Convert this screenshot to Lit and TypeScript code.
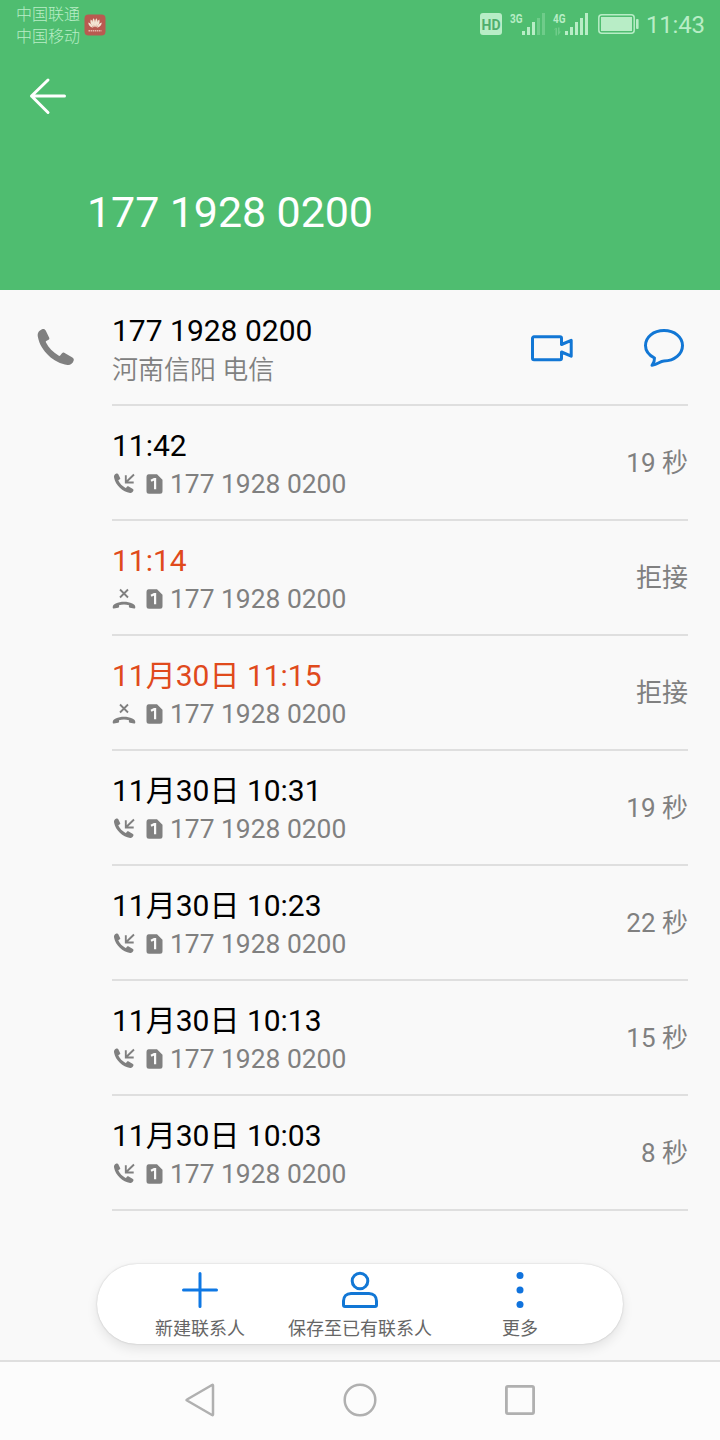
import { LitElement, html, css, svg } from "lit";
import { customElement, property } from "lit/decorators.js";

interface Call {
  time: string;
  note: string;
  rejected?: boolean;
}

const NUMBER = "177 1928 0200";

const CALLS: Call[] = [
  { time: "11:42", note: "19 秒" },
  { time: "11:14", note: "拒接", rejected: true },
  { time: "11月30日 11:15", note: "拒接", rejected: true },
  { time: "11月30日 10:31", note: "19 秒" },
  { time: "11月30日 10:23", note: "22 秒" },
  { time: "11月30日 10:13", note: "15 秒" },
  { time: "11月30日 10:03", note: "8 秒" },
];

const handset = svg`<path d="M11.700 5.600L15.200 12.800C15.600 13.800 15.300 14.400 14.500 14.800L12.300 16C11.700 16.400 11.700 16.900 12 17.600C14.500 22.500 19 27.500 24.500 30.600C25.200 31 25.700 31 26.200 30.400L28 28.200C28.700 27.400 29.400 27.300 30.200 27.700L38 32.200C39.600 33.100 40.100 34.100 39.700 35.500C38.700 38.600 36.200 40.400 33.500 40C20 38.200 6.500 26 3.900 12C3.200 8.500 4.200 5.800 8 4.200C9.800 3.500 10.900 4 11.700 5.600Z"/>`;

@customElement("status-bar")
class StatusBar extends LitElement {
  static styles = css`
    :host { display: flex; height: 48px; padding: 0 16px 0 16px; color: #b8edc6; }
    .carriers { padding-top: 4px; font-size: 16px; line-height: 22px; font-weight: 300; }
    .app { margin: 14px 0 0 4px; width: 22px; height: 22px; }
    .space { flex: 1; }
    .signal { width: 161px; height: 48px; }
    .clock { width: 58px; margin-left: 6px; font-size: 24px; line-height: 50px; letter-spacing: -0.2px; white-space: nowrap; }
  `;
  render() {
    return html`
      <div class="carriers"><div>中国联通</div><div>中国移动</div></div>
      <svg class="app" viewBox="0 0 22 22">
        <rect x=".5" y=".5" width="21" height="21" rx="4" fill="#b95a50" />
        <g fill="#f3e6d4">
          <path d="M10.600 13.200C8.200 9.500 7.800 6 9.700 4.200c1.500 2 1.700 5.500.9 9zM11.400 13.200c2.400-3.700 2.800-7.200.9-9-1.500 2-1.700 5.500-.9 9z" />
          <path d="M9.800 13.400C6.800 11 5.800 8 6.700 5.600 9 7 9.900 10 9.800 13.400zM12.200 13.400c3-2.400 4-5.400 3.100-7.800-2.300 1.400-3.200 4.400-3.100 7.800z" />
          <path d="M9 13.800C6 13.200 4.200 11 4.300 8.500 6.900 9.200 8.400 11.200 9 13.800zM13 13.800c3-.6 4.800-2.800 4.700-5.300-2.600.7-4.100 2.700-4.700 5.300z" />
        </g>
        <path d="M4.500 16.800h13" stroke="#e8b8ad" stroke-width="1.500" stroke-dasharray="1.500 .6" />
      </svg>
      <div class="space"></div>
      <svg class="signal" viewBox="479 0 161 48" fill="#b8edc6">
        <rect x="480" y="13" width="22" height="22" rx="3" />
        <text x="481.500" y="29.500" font-family="Roboto" font-weight="700" font-size="15.500" textLength="19" lengthAdjust="spacingAndGlyphs" fill="#4fae6c">HD</text>
        <g font-family="Roboto" font-weight="700" font-size="12.500">
          <text x="510" y="22.500" textLength="12.500" lengthAdjust="spacingAndGlyphs">3G</text>
          <text x="553" y="22.500" textLength="12.500" lengthAdjust="spacingAndGlyphs">4G</text>
        </g>
        <path d="M522 31h3v4h-3zM527 27h3v8h-3zM532 22h3v13h-3zM565 31h3v4h-3zM570 27h3v8h-3zM575 22h3v13h-3zM580 18h3v17h-3zM585 13h3v22h-3z" />
        <path opacity=".3" d="M537 18h3v17h-3zM542 13h3v22h-3zM553.500 30.500l2-3v8h1.500v-8zM558 27.500v8l3-4h-1.500v-4z" />
        <rect x="598.800" y="14.800" width="35.400" height="18.400" rx="3" fill="none" stroke="#b8edc6" stroke-width="1.500" />
        <rect x="601" y="17" width="31" height="14" />
        <rect x="636" y="19" width="2.600" height="10" rx="1" />
      </svg>
      <div class="clock">11:43</div>
    `;
  }
}

@customElement("call-row")
class CallRow extends LitElement {
  @property({ attribute: false }) call!: Call;

  static styles = css`
    :host { display: flex; height: 113px; align-items: center; justify-content: space-between; border-bottom: 2px solid #dfdfdf; }
    .main { margin-top: 4px; }
    .time { font-size: 30px; line-height: 38px; color: #000; padding-top: 1px; white-space: nowrap; }
    .time.rejected { color: #e04a1c; }
    .line { display: flex; align-items: center; height: 38px; font-size: 26.400px; color: #808080; }
    .kind { width: 24px; height: 24px; margin-right: 10px; }
    .sim { width: 17px; height: 20px; margin-right: 7px; }
    .note { font-size: 26px; line-height: 38px; color: #808080; padding-top: 1px; }
  `;
  render() {
    const { time, note, rejected } = this.call;
    return html`
      <div class="main">
        <div class="time ${rejected ? "rejected" : ""}">${time}</div>
        <div class="line">
          ${rejected
            ? html`<svg class="kind" viewBox="0 0 24 24" fill="#808080">
                <path d="M8 2.500l8 8M16 2.500l-8 8" stroke="#808080" stroke-width="1.800" />
                <path transform="translate(0 1)" d="M.700 19.200c0-1.700 1-2.700 3-3.600 5-2.400 11.600-2.400 16.600 0 2 .9 3 1.900 3 3.600 0 1-.4 1.400-1.200 1.300l-4.200-.8c-.8-.2-1.100-.6-1-1.300l.1-1.200c-3.200-.9-6.800-.9-10 0l.1 1.200c.1.700-.2 1.100-1 1.300l-4.200.8C1.100 20.600.7 20.200.7 19.200z" />
              </svg>`
            : html`<svg class="kind" viewBox="0 0 24 24" fill="#808080">
                <g transform="translate(0 -.700) scale(.540)">${handset}</g>
                <path d="M22 2.500l-8 7.800M13.800 3.300v7.200h7.900" fill="none" stroke="#808080" stroke-width="1.900" />
              </svg>`}
          <svg class="sim" viewBox="0 0 17 20">
            <path d="M2.500.3H11l5.500 5.500v11.400a2.500 2.500 0 0 1-2.500 2.500H3A2.500 2.500 0 0 1 .5 17.200V2.800A2.500 2.500 0 0 1 2.500.3z" fill="#808080" />
            <path d="M5 6.800l3.200-1.600h.9v10" fill="none" stroke="#fafafa" stroke-width="2.200" />
          </svg>
          <span>${NUMBER}</span>
        </div>
      </div>
      <div class="note">${note}</div>
    `;
  }
}

@customElement("app-root")
class AppRoot extends LitElement {
  static styles = css`
    :host { display: flex; flex-direction: column; height: 1440px; background: #f9f9f9; font-family: Roboto, "Noto Sans CJK SC", sans-serif; overflow: hidden; }
    .head { height: 290px; background: #4fbd70; color: #fff; }
    .back { display: block; width: 40px; height: 40px; margin: 28px 0 0 28px; }
    .title { margin: 69px 0 0 87px; font-size: 43px; line-height: 54px; letter-spacing: -0.1px; }
    .body { height: 1070px; display: flex; flex-direction: column; }
    .contact { display: flex; height: 116px; }
    .phone { flex: none; width: 44px; height: 44px; margin: 35px 34px 0 34px; }
    .info { flex: 1; margin-right: 32px; display: flex; box-sizing: border-box; border-bottom: 2px solid #dfdfdf; padding-top: 21px; }
    .who { flex: 1; }
    .number { font-size: 30px; line-height: 40px; }
    .place { font-size: 26px; line-height: 38px; color: #808080; font-weight: 350; }
    .video { width: 44px; height: 30px; margin: 22px 69px 0 0; }
    .chat { width: 42px; height: 40px; margin: 17px 3px 0 0; }
    .log { margin: 0 32px 0 112px; }
    .actions { box-sizing: border-box; width: 526px; height: 80px; margin: auto auto 16px 97px; border-radius: 40px; background: #fff; box-shadow: 0 0 2px rgba(0,0,0,.2), 0 5px 12px rgba(0,0,0,.09); display: grid; grid-template-columns: 160px 160px 160px; padding-left: 23px; }
    .action { display: flex; flex-direction: column; align-items: center; font-size: 18px; line-height: 26px; color: #666; white-space: nowrap; padding-top: 6px; }
    .action svg { flex: none; width: 40px; height: 40px; margin-bottom: 6px; }
    .nav { flex: 1; box-sizing: border-box; border-top: 2px solid #dfdfdf; padding-bottom: 2px; background: #fcfcfc; display: grid; grid-template-columns: 160px 160px 160px; justify-content: center; justify-items: center; align-items: center; }
    .nav svg { width: 36px; height: 36px; }
  `;
  render() {
    return html`
      <div class="head">
        <status-bar></status-bar>
        <svg class="back" viewBox="0 0 40 40" fill="none" stroke="#fff" stroke-width="3" stroke-linecap="round" stroke-linejoin="round">
          <path d="M20 4L3.500 20 20 36.500M3.500 20h33" />
        </svg>
        <div class="title">${NUMBER}</div>
      </div>
      <div class="body">
        <div class="contact">
          <svg class="phone" viewBox="0 0 44 44" fill="#808080">${handset}</svg>
          <div class="info">
            <div class="who">
              <div class="number">${NUMBER}</div>
              <div class="place">河南信阳 电信</div>
            </div>
            <svg class="video" viewBox="0 0 44 30" fill="none" stroke="#1277d5" stroke-width="3" stroke-linejoin="round">
              <path d="M31.500 11.500V5.300a1.500 1.500 0 0 0-1.500-1.500H4a1.500 1.500 0 0 0-1.500 1.500v19.900A1.500 1.500 0 0 0 4 26.700h26a1.500 1.500 0 0 0 1.500-1.500V19l9.700 4.200V7.300z" />
            </svg>
            <svg class="chat" viewBox="0 0 42 40" fill="none" stroke="#1277d5" stroke-width="3" stroke-linejoin="round">
              <path d="M11.500 30C5.500 27 2.500 22.500 2.500 17.500 2.500 9 10.500 2.500 21 2.500S39.500 9 39.500 17.500 31.500 33 21 33c-4.500 0-5.500 3.500-12 4.300 1.800-2.300 2.800-3.800 2.500-7.300z" />
            </svg>
          </div>
        </div>
        <div class="log">${CALLS.map((c) => html`<call-row .call=${c}></call-row>`)}</div>
        <div class="actions">
          <div class="action">
            <svg viewBox="0 0 40 40" stroke="#0f78e4" stroke-width="3" stroke-linecap="round"><path d="M20 3.500v33M3.500 20h33" /></svg>
            新建联系人
          </div>
          <div class="action">
            <svg viewBox="0 0 40 40" fill="none" stroke="#1277d5" stroke-width="3" stroke-linejoin="round">
              <circle cx="20" cy="11" r="7.800" />
              <path d="M3.500 35v-4c0-4.500 3-7.500 7.500-7.500h18c4.500 0 7.500 3 7.500 7.500v4a1.500 1.500 0 0 1-1.500 1.500H5A1.500 1.500 0 0 1 3.500 35z" />
            </svg>
            保存至已有联系人
          </div>
          <div class="action">
            <svg viewBox="0 0 40 40" fill="#1073dd"><circle cx="20" cy="5.500" r="3.500" /><circle cx="20" cy="20" r="3.500" /><circle cx="20" cy="34.500" r="3.500" /></svg>
            更多
          </div>
        </div>
      </div>
      <div class="nav">
        <svg viewBox="0 0 36 36" fill="none" stroke="#b0b0b0" stroke-width="2.500" stroke-linejoin="round"><path d="M5 17.500Q4 18 5 18.500L30 33q1 .500 1-.500v-29q0-1-1-.500z" /></svg>
        <svg viewBox="0 0 36 36" fill="none" stroke="#b0b0b0" stroke-width="2.500"><circle cx="18" cy="18" r="15.300" /></svg>
        <svg viewBox="0 0 36 36" fill="none" stroke="#b0b0b0" stroke-width="2.800"><rect x="4.400" y="4.400" width="27.200" height="27.200" rx="1.500" /></svg>
      </div>
    `;
  }
}
